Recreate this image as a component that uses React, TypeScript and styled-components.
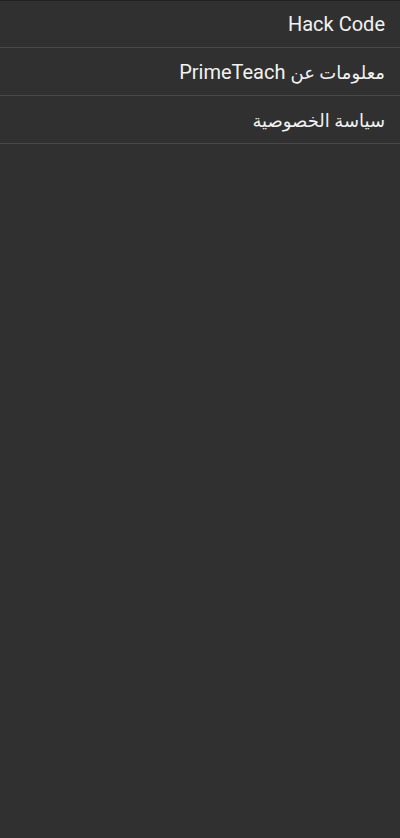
import React from 'react';
import styled, { createGlobalStyle } from 'styled-components';

const GlobalStyle = createGlobalStyle`
  html, body {
    margin: 0;
    padding: 0;
    background: #303030;
  }
  body {
    font-family: Roboto, "Noto Sans", "DejaVu Sans", sans-serif;
  }
`;

const Screen = styled.div`
  min-height: 838px;
  background: #303030;
  box-shadow: inset 0 1px 0 #222222;
`;

const Menu = styled.ul`
  list-style: none;
  margin: 0;
  padding: 0;
  direction: rtl;
`;

const Item = styled.li`
  height: 47px;
  display: flex;
  align-items: center;
  padding: 0 15px;
  border-bottom: 1px solid #484848;
  color: #f2f2f2;
  font-size: 20px;
  cursor: pointer;
`;

// Arabic glyphs come out wider in the fallback font, so they get a smaller size
const Ar = styled.span`
  font-size: 18px;
`;

const items: React.ReactNode[] = [
  'Hack Code',
  <>
    <Ar>معلومات عن</Ar> PrimeTeach
  </>,
  <Ar>سياسة الخصوصية</Ar>,
];

export default function App() {
  return (
    <>
      <GlobalStyle />
      <Screen>
        <Menu>
          {items.map((label, i) => (
            <Item key={i}>
              <span>{label}</span>
            </Item>
          ))}
        </Menu>
      </Screen>
    </>
  );
}
